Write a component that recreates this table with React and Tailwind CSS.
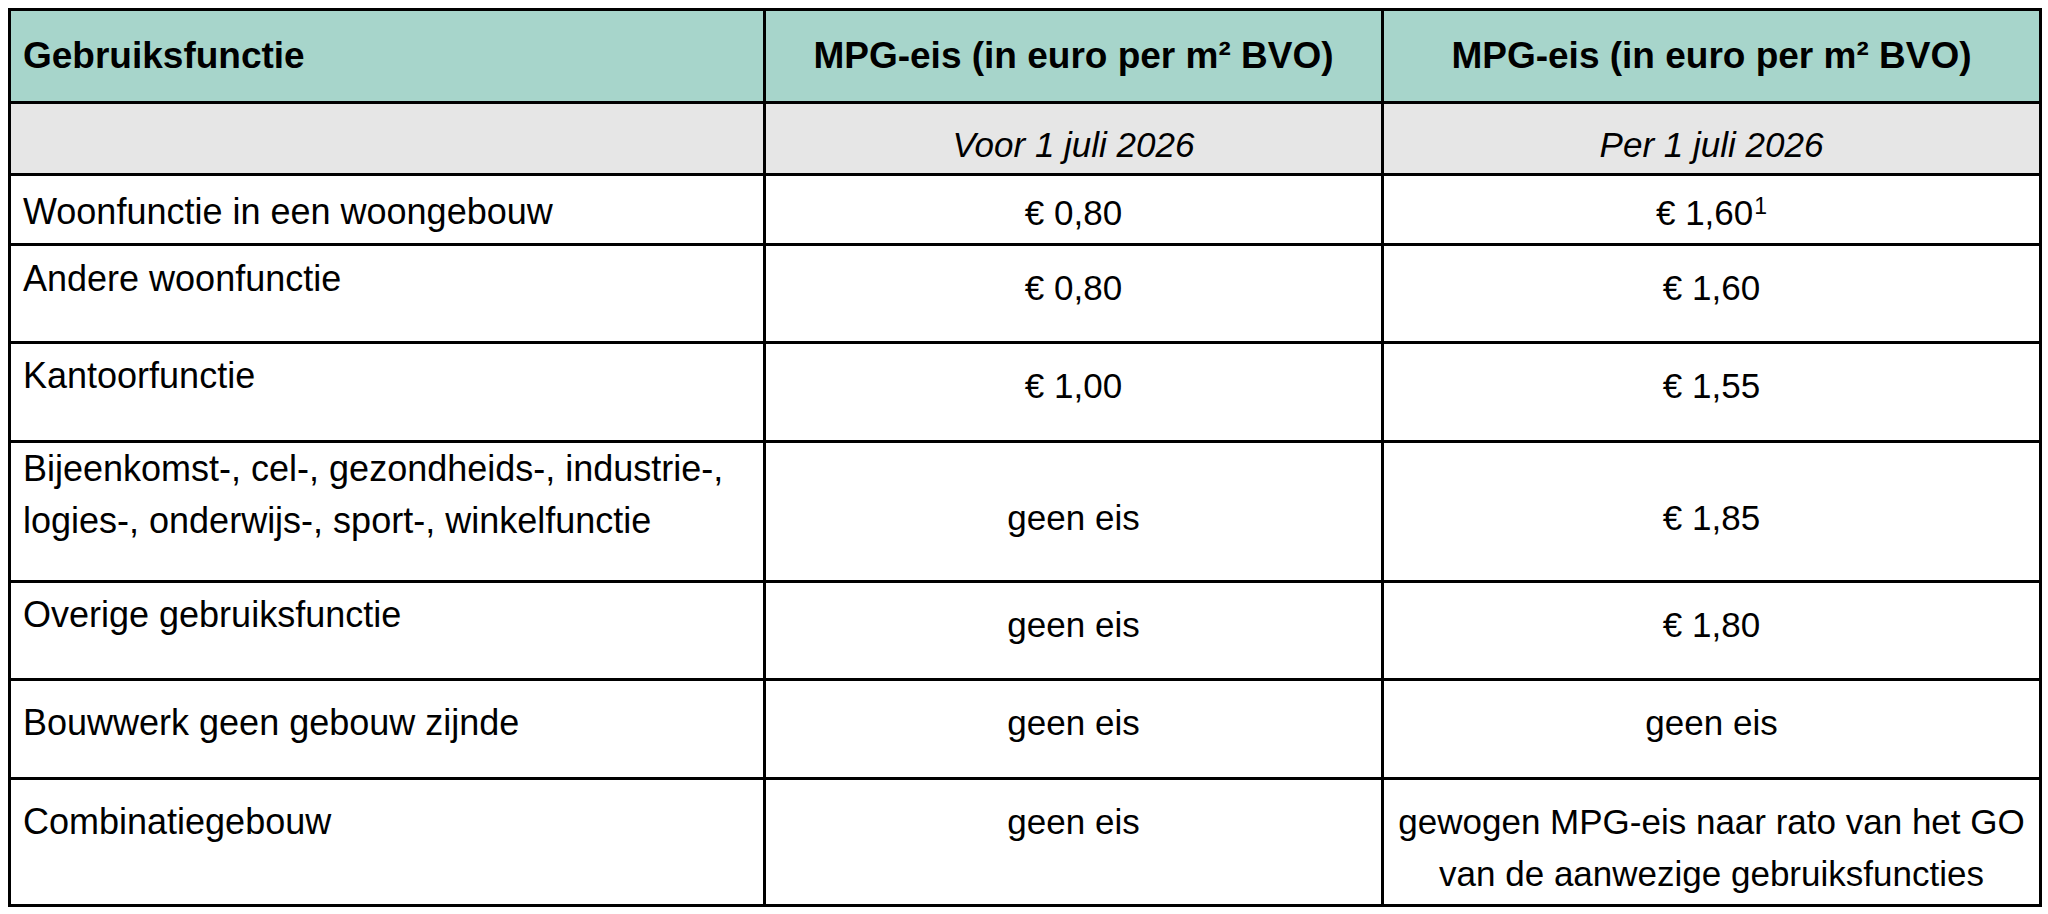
import React from "react";

const rows = [
  { name: ["Woonfunctie in een woongebouw"], a: "€ 0,80", b: "€ 1,60", sup: true, h: "h-[70px]", p1: "pt-[10px]", p2: "pt-[11px]" },
  { name: ["Andere woonfunctie"], a: "€ 0,80", b: "€ 1,60", h: "h-[98px]", p1: "pt-[7px]", p2: "pt-[16px]" },
  { name: ["Kantoorfunctie"], a: "€ 1,00", b: "€ 1,55", h: "h-[99px]", p1: "pt-[6px]", p2: "pt-[16px]" },
  {
    name: ["Bijeenkomst-, cel-, gezondheids-, industrie-,", "logies-, onderwijs-, sport-, winkelfunctie"],
    a: "geen eis",
    b: "€ 1,85",
    h: "h-[140px]",
    p1: "pt-[0px] leading-[50px]",
    p2: "pt-[49px]",
  },
  { name: ["Overige gebruiksfunctie"], a: "geen eis", b: "€ 1,80", h: "h-[98px]", p1: "pt-[6px]", p2: "pt-[16px]" },
  { name: ["Bouwwerk geen gebouw zijnde"], a: "geen eis", b: "geen eis", h: "h-[99px]", p1: "pt-[16px]", p2: "pt-[16px]" },
  {
    name: ["Combinatiegebouw"],
    a: "geen eis",
    b: ["gewogen MPG-eis naar rato van het GO", "van de aanwezige gebruiksfuncties"],
    h: "h-[127px]",
    p1: "pt-[16px]",
    p2: "pt-[16px] leading-[51px]",
  },
];

const head = "border-[3px] border-black bg-[#a7d5cb] font-bold text-[37px] leading-[44px] text-black";
const cell = "border-[3px] border-black align-top text-[35px] leading-[52px] text-black";

export default function App() {
  return (
    <div className="bg-white w-[2048px] h-[914px] pt-[8px] pl-[8px] font-['Liberation_Sans',Arial,sans-serif]">
      <table className="table-fixed border-collapse w-[2033px]">
        <colgroup>
          <col className="w-[755px]" />
          <col className="w-[618px]" />
          <col className="w-[658px]" />
        </colgroup>
        <thead>
          <tr className="h-[93px]">
            <th className={`${head} text-left pl-[12px]`}>Gebruiksfunctie</th>
            <th className={`${head} text-center`}>MPG-eis (in euro per m² BVO)</th>
            <th className={`${head} text-center`}>MPG-eis (in euro per m² BVO)</th>
          </tr>
        </thead>
        <tbody>
          <tr className="h-[72px]">
            <td className={`${cell} bg-[#e6e6e6]`}></td>
            <td className={`${cell} bg-[#e6e6e6] italic text-center pt-[15px]`}>Voor 1 juli 2026</td>
            <td className={`${cell} bg-[#e6e6e6] italic text-center pt-[15px]`}>Per 1 juli 2026</td>
          </tr>
          {rows.map((r, i) => (
            <tr key={i} className={r.h}>
              <td className={`${cell} text-[36px] pl-[12px] ${r.p1}`}>
                {r.name.map((n) => (
                  <div key={n}>{n}</div>
                ))}
              </td>
              <td className={`${cell} text-center ${r.p2}`}>{r.a}</td>
              <td className={`${cell} text-center ${r.p2}`}>
                {Array.isArray(r.b) ? (
                  r.b.map((t) => <div key={t}>{t}</div>)
                ) : (
                  <span>
                    {r.b}
                    {r.sup && <span className="text-[23px] leading-none align-[11px] ml-[1px]">1</span>}
                  </span>
                )}
              </td>
            </tr>
          ))}
        </tbody>
      </table>
    </div>
  );
}
